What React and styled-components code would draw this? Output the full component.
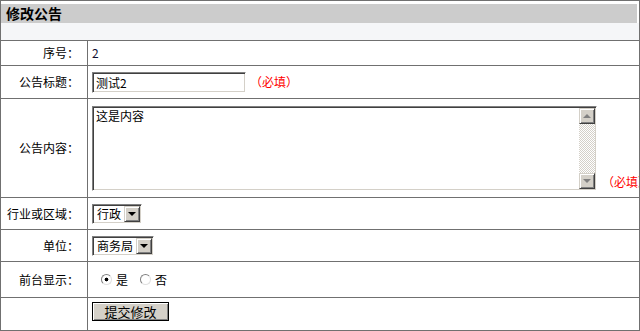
import React from "react";
import styled, { createGlobalStyle } from "styled-components";

const GlobalStyle = createGlobalStyle`
  html, body {
    margin: 0;
    padding: 0;
    background: #fff;
  }
  body {
    font-family: "Noto Sans CJK SC", "Liberation Sans", sans-serif;
    font-size: 12px;
    color: #000;
  }
`;

const Frame = styled.div`
  width: 640px;
  height: 331px;
  box-sizing: border-box;
  border: 1px solid #707070;
  overflow: hidden;
`;

const TitleBar = styled.div`
  margin: 3px 2px 0 0;
  height: 19px;
  padding-left: 5px;
  background: #cccccc;
  font-size: 14px;
  font-weight: bold;
  line-height: 19px;
`;

const SubBar = styled.div`
  height: 17px;
  background: #f5f6f8;
`;

const Row = styled.div`
  display: grid;
  grid-template-columns: 87px 1fr;
  height: ${(p) => p.$h}px;
  box-sizing: border-box;
  border-top: 1px solid #707070;
`;

const Label = styled.div`
  box-sizing: border-box;
  border-right: 1px solid #707070;
  display: flex;
  align-items: center;
  justify-content: flex-end;
  padding-right: 8px;
  white-space: nowrap;
  line-height: 14px;
`;

const Field = styled.div`
  display: flex;
  align-items: center;
  padding-left: 4px;
  min-width: 0;
  overflow: hidden;
  white-space: nowrap;
  line-height: 14px;
`;

const Value = styled.span`
  color: #101030;
`;

const Required = styled.span`
  flex-shrink: 0;
  color: #ff0000;
  margin-left: ${(p) => p.$gap || 4}px;
  ${(p) => p.$bottom && `align-self: flex-end; margin-bottom: ${p.$bottom}px;`}
`;

// classic win32 sunken edge
const sunken = `
  box-sizing: border-box;
  flex-shrink: 0;
  border: 1px solid;
  border-color: #808080 #ffffff #ffffff #808080;
  box-shadow: inset 1px 1px 0 #404040, inset -1px -1px 0 #d4d0c8;
  padding: 1px;
  background: #fff;
`;

const TextInput = styled.input`
  ${sunken}
  width: 154px;
  height: 21px;
  padding: 1px 2px 0 3px;
  font: inherit;
  font-size: 12px;
  color: #000;
  outline: none;
`;

const MemoBox = styled.div`
  ${sunken}
  display: flex;
  width: 505px;
  height: 85px;
`;

const Memo = styled.textarea`
  flex: 1;
  border: none;
  outline: none;
  resize: none;
  padding: 1px 2px;
  font: inherit;
  font-size: 12px;
  line-height: 14px;
  overflow: hidden;
`;

const ScrollBar = styled.div`
  width: 16px;
  display: flex;
  flex-direction: column;
`;

const Track = styled.div`
  flex: 1;
  background: repeating-conic-gradient(#d4d0c8 0 25%, #ffffff 0 50%) 0 0 / 2px 2px;
`;

const RaisedButton = styled.span`
  box-sizing: border-box;
  width: 16px;
  height: 16px;
  display: flex;
  align-items: center;
  justify-content: center;
  background: #d4d0c8;
  border: 1px solid;
  border-color: #d4d0c8 #404040 #404040 #d4d0c8;
  box-shadow: inset 1px 1px 0 #ffffff, inset -1px -1px 0 #808080;
`;

const Arrow = styled.span`
  width: 0;
  height: 0;
  border-left: 4px solid transparent;
  border-right: 4px solid transparent;
  ${(p) =>
    p.$up
      ? `border-bottom: 4px solid ${p.$color};`
      : `border-top: 4px solid ${p.$color};`}
`;

const Combo = styled.div`
  ${sunken}
  display: inline-flex;
  align-items: center;
  height: 20px;
`;

const Select = styled.select`
  appearance: none;
  border: none;
  outline: none;
  background: transparent;
  font: inherit;
  font-size: 12px;
  color: #000;
  padding: 0 2px 0 3px;
  margin: 0;
  height: 16px;
  line-height: 16px;
`;

const RadioGroup = styled.div`
  display: flex;
  align-items: center;
  padding-left: 9px;
`;

const RadioLabel = styled.label`
  display: flex;
  align-items: center;
  gap: 4px;
  margin-right: 12px;
`;

const Radio = styled.input`
  appearance: none;
  box-sizing: border-box;
  width: 11px;
  height: 11px;
  margin: 0;
  border-radius: 50%;
  border: 1px solid;
  border-color: #808080 #e0e0e0 #e0e0e0 #808080;
  background: ${(p) =>
    p.checked
      ? "radial-gradient(circle, #000 0 1.6px, #fff 2.2px)"
      : "#fff"};
`;

const SubmitButton = styled.button`
  box-sizing: border-box;
  flex-shrink: 0;
  width: 77px;
  height: 19px;
  padding: 0;
  margin-bottom: 6px;
  background: #d4d0c8;
  border: 1px solid #000;
  box-shadow: inset 1px 1px 0 #ffffff, inset -1px -1px 0 #808080;
  font: inherit;
  font-size: 13px;
  line-height: 15px;
  color: #000;
`;

const ComboField = ({ value }) => (
  <Combo>
    <Select defaultValue={value}>
      <option>{value}</option>
    </Select>
    <RaisedButton>
      <Arrow $color="#000" />
    </RaisedButton>
  </Combo>
);

export default function App() {
  return (
    <>
      <GlobalStyle />
      <Frame>
        <TitleBar>修改公告</TitleBar>
        <SubBar />
        <Row $h={25}>
          <Label>序号：</Label>
          <Field>
            <Value>2</Value>
          </Field>
        </Row>
        <Row $h={33}>
          <Label>公告标题：</Label>
          <Field>
            <TextInput defaultValue="测试2" />
            <Required>（必填）</Required>
          </Field>
        </Row>
        <Row $h={99}>
          <Label>公告内容：</Label>
          <Field>
            <MemoBox>
              <Memo defaultValue="这是内容" />
              <ScrollBar>
                <RaisedButton>
                  <Arrow $up $color="#808080" />
                </RaisedButton>
                <Track />
                <RaisedButton>
                  <Arrow $color="#808080" />
                </RaisedButton>
              </ScrollBar>
            </MemoBox>
            <Required $gap={5} $bottom={8}>
              （必填）
            </Required>
          </Field>
        </Row>
        <Row $h={32}>
          <Label>行业或区域：</Label>
          <Field>
            <ComboField value="行政" />
          </Field>
        </Row>
        <Row $h={32}>
          <Label>单位：</Label>
          <Field>
            <ComboField value="商务局" />
          </Field>
        </Row>
        <Row $h={36}>
          <Label>前台显示：</Label>
          <Field>
            <RadioGroup>
              <RadioLabel>
                <Radio type="radio" name="show" checked readOnly />是
              </RadioLabel>
              <RadioLabel>
                <Radio type="radio" name="show" readOnly />否
              </RadioLabel>
            </RadioGroup>
          </Field>
        </Row>
        <Row $h={33}>
          <Label />
          <Field>
            <SubmitButton>提交修改</SubmitButton>
          </Field>
        </Row>
      </Frame>
    </>
  );
}
